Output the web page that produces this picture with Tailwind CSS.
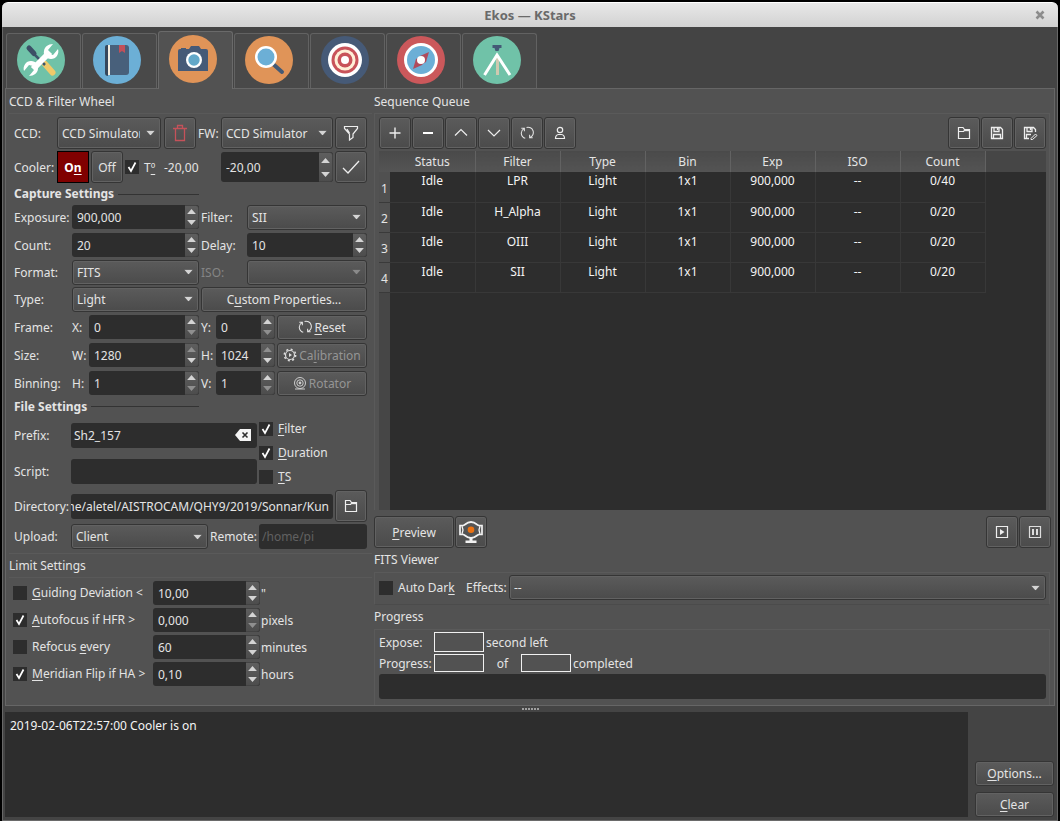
<!DOCTYPE html>
<html lang="en">
<head>
<meta charset="utf-8">
<title>Ekos — KStars</title>
<script src="https://cdn.jsdelivr.net/npm/@tailwindcss/browser@4"></script>
</head>
<body class="bg-black">
<svg class="hidden" aria-hidden="true">
  <symbol id="up" viewBox="0 0 7 4"><path d="M3.5 0 7 4H0z" fill="currentColor"/></symbol>
  <symbol id="down" viewBox="0 0 7 4"><path d="M0 0h7L3.5 4z" fill="currentColor"/></symbol>
  <symbol id="tick" viewBox="0 0 14 14"><path d="M3.5 7 6 11 10.500 2.500" fill="none" stroke="#fff" stroke-width="1.700"/></symbol>
  <symbol id="folder" viewBox="0 0 16 16"><path d="M2.500 13.500V2.500h4.500l1.500 2h5v9zM2.500 6.500h5l1.500-2" fill="none" stroke="#eee" stroke-width="1.200"/><path d="M8 4h6v2.200H8z" fill="#eee"/></symbol>
  <symbol id="sync" viewBox="0 0 16 16"><path d="M6 14A6 6 0 0 1 4.500 3M1.500 2.500h3.500v3.500M7.500 1.700a6 6 0 0 1 4 11.300M14.500 13.500h-3.500v-3.500" fill="none" stroke="currentColor" stroke-width="1.200"/></symbol>
</svg>

<div class="mx-[2px] pt-[2px] min-h-screen flex flex-col font-['Noto_Sans',sans-serif] text-[12px] leading-[21px] text-[#e4e4e4]
  [&_u]:underline-offset-2
  [&_.btn]:flex [&_.btn]:items-center [&_.btn]:justify-center [&_.btn]:rounded-[3px] [&_.btn]:border [&_.btn]:border-[#353535] [&_.btn]:bg-linear-to-b [&_.btn]:from-[#5b5b5b] [&_.btn]:to-[#4b4b4b] [&_.btn]:shadow-[inset_0_0_0_1px_#626262]
  [&_.tool]:w-8 [&_.tool]:h-8 [&_.tool]:shrink-0
  [&_.sel]:relative [&_.sel]:h-[25px] [&_.sel_select]:appearance-none [&_.sel_select]:w-full [&_.sel_select]:h-full [&_.sel_select]:pl-1 [&_.sel_select]:pr-5 [&_.sel_select]:rounded-[3px] [&_.sel_select]:border [&_.sel_select]:border-[#353535] [&_.sel_select]:bg-linear-to-b [&_.sel_select]:from-[#5b5b5b] [&_.sel_select]:to-[#4b4b4b] [&_.sel_select]:shadow-[inset_0_0_0_1px_#626262]
  [&_.sel_svg]:absolute [&_.sel_svg]:right-[6px] [&_.sel_svg]:top-1/2 [&_.sel_svg]:-translate-y-1/2 [&_.sel_svg]:w-[9px] [&_.sel_svg]:h-[5px] [&_.sel_svg]:text-[#d4d4d4] [&_.sel_svg]:pointer-events-none
  [&_.field]:h-[25px] [&_.field]:min-w-0 [&_.field]:rounded-[3px] [&_.field]:bg-[#2d2d2d]
  [&_.spin]:flex [&_.spin]:h-6 [&_.spin]:rounded-[3px] [&_.spin]:bg-[#2d2d2d] [&_.spin]:overflow-hidden [&_.spin_input]:flex-1 [&_.spin_input]:min-w-0 [&_.spin_input]:pl-[5px]
  [&_.spin_div]:w-[14px] [&_.spin_div]:flex [&_.spin_div]:flex-col [&_.spin_div]:border [&_.spin_div]:border-l-0 [&_.spin_div]:border-[#434343] [&_.spin_div]:rounded-r-[3px] [&_.spin_div]:bg-linear-to-b [&_.spin_div]:from-[#5e5e5e] [&_.spin_div]:to-[#4d4d4d]
  [&_.spin_button]:flex-1 [&_.spin_button]:flex [&_.spin_button]:items-center [&_.spin_button]:justify-center [&_.spin_button]:text-[#d4d4d4] [&_.spin_button:disabled]:text-[#8f8f8f] [&_.spin_svg]:w-[9px] [&_.spin_svg]:h-[5px]
  [&_.chk]:relative [&_.chk]:w-[14px] [&_.chk]:h-[14px] [&_.chk]:shrink-0 [&_.chk_input]:block [&_.chk_input]:appearance-none [&_.chk_input]:w-[14px] [&_.chk_input]:h-[14px] [&_.chk_input]:bg-[#2d2d2d] [&_.chk_svg]:hidden [&_.chk_svg]:absolute [&_.chk_svg]:inset-0 [&_.chk_svg]:w-[14px] [&_.chk_svg]:h-[14px] [&_.chk_svg]:pointer-events-none [&_.chk_input:checked+svg]:block
  [&_.row]:flex [&_.row]:items-center">

  <header class="relative h-[25px] flex items-center justify-center rounded-t-md bg-linear-to-b from-[#e8e8e8] to-[#d2d2d2] border-t border-white">
    <h1 class="font-bold text-[13px] text-[#6a6a6a]">Ekos — KStars</h1>
    <button aria-label="Close" class="absolute right-[13px] top-[7px]"><svg class="w-[10px] h-[10px]" viewBox="0 0 10 10"><path d="M1.500 1.500l7 7M8.500 1.500l-7 7" stroke="#8c8c8c" stroke-width="2.600"/></svg></button>
  </header>

  <div class="flex-1 flex flex-col bg-[#444] border-x border-[#686868]">
  <nav class="h-[61px] pl-[3px] flex items-end gap-px
    [&_button]:w-[75px] [&_button]:h-[55px] [&_button]:flex [&_button]:justify-center [&_button]:border [&_button]:border-b-0 [&_button]:border-[#626262] [&_button]:rounded-t-[3px] [&_button]:bg-[#494949] [&_button]:pt-[2px] [&_button]:pr-[5px] [&_svg]:w-12 [&_svg]:h-12">
    <button aria-label="Setup"><svg viewBox="0 0 48 48"><circle cx="24" cy="24" r="24" fill="#70c2a8"/>
      <path d="M28 28l7.500 8.500" stroke="#efc96a" stroke-width="6" stroke-linecap="round"/><path d="M16 17l12 12" stroke="#3e556b" stroke-width="2.500"/><path d="M12 12l5 5.500" stroke="#3c4f66" stroke-width="5" stroke-linecap="round"/>
      <path d="M16 33L33 16" stroke="#fff" stroke-width="6"/><path d="M36 8l-5 6 1 4 4 1 5-6c1.500 5-2 10-7 10-5 0-8-4-7-8 .5-4 4-7 9-7zM12 40l5-6-1-4-4-1-5 6c-1.500-5 2-10 7-10 5 0 8 4 7 8-.5 4-4 7-9 7z" fill="#fff"/></svg></button>
    <button aria-label="Scheduler"><svg viewBox="0 0 48 48"><circle cx="24" cy="24" r="24" fill="#6cafd6"/>
      <path d="M15 9h-1q-2 0-2 2v26q0 3 3 3z" fill="#35475b"/><path d="M17 9h16q3 0 3 3v24q0 3-3 3H17z" fill="#48607b"/><path d="M15 9h2v30h-2z" fill="#f3eee0"/><path d="M26 9h6v8l-3-2-3 2z" fill="#c1505a"/></svg></button>
    <button aria-label="CCD" aria-current="page" class="relative h-[58px]! pt-[3px]! -mb-px bg-[#525252]! border-[#6a6a6a]!"><svg viewBox="0 0 48 48"><circle cx="24" cy="24" r="24" fill="#e09458"/>
      <path d="M9 36V16q0-2 2-2h1v-1h5v1h3l2-3h8l2 3h5q2 0 2 2v20z" fill="#465a77"/><circle cx="25" cy="25" r="8" fill="#fff"/><circle cx="25" cy="25" r="5.700" fill="#62a8c9"/></svg></button>
    <button aria-label="Focus"><svg viewBox="0 0 48 48"><circle cx="24" cy="24" r="24" fill="#e09458"/>
      <path d="M28 28l9 8" stroke="#445a76" stroke-width="4" stroke-linecap="round"/><circle cx="21" cy="21" r="11" fill="#fff"/><circle cx="21" cy="21" r="8.500" fill="#6cafd6"/></svg></button>
    <button aria-label="Align"><svg viewBox="0 0 48 48"><circle cx="24" cy="24" r="24" fill="#465a77"/>
      <circle cx="24" cy="24" r="17" fill="#fff"/><circle cx="24" cy="24" r="13.500" fill="#c8535a"/><circle cx="24" cy="24" r="10.500" fill="#fff0d8"/><circle cx="24" cy="24" r="7.500" fill="#c8535a"/><circle cx="24" cy="24" r="4" fill="#fff"/></svg></button>
    <button aria-label="Guide"><svg viewBox="0 0 48 48"><circle cx="24" cy="24" r="24" fill="#cb585b"/>
      <circle cx="24" cy="24" r="17" fill="#fff"/><circle cx="24" cy="24" r="14" fill="#6cafd6"/><path d="M32 16l-3 10-5 3-4-4 3-5z" fill="#b04b5c"/><path d="M16 33l3-10 5-3 4 4-3 5z" fill="#b04b5c"/><circle cx="24" cy="24" r="4" fill="#fff"/></svg></button>
    <button aria-label="Mount"><svg viewBox="0 0 48 48"><circle cx="24" cy="24" r="24" fill="#70c2a8"/>
      <path d="M19.500 9h9v3h-2l-1 3h-3l-1-3h-2z" fill="#445a76"/><path d="M24.500 22v17" stroke="#cfc9b0" stroke-width="3"/><path d="M11.500 39L24 19l13 20" fill="none" stroke="#fff" stroke-width="3"/></svg></button>
  </nav>

  <main class="mx-[2px] flex-1 flex border border-[#666] bg-[#525252]">
    <section class="w-[366px] shrink-0 pl-[3px]">
      <h2 class="h-6 pt-[2px]">CCD &amp; Filter Wheel</h2>
      <div class="border-t border-[#595959] pl-[5px] pr-[5px] pt-[3px] pb-1">
        <div class="row">
          <label for="ccd" class="w-[43px]">CCD:</label>
          <div class="sel w-[104px] h-8!"><select id="ccd"><option>CCD Simulator</option></select><svg><use href="#down"/></svg></div>
          <button class="btn tool ml-[3px]" aria-label="Remove CCD"><svg class="w-4 h-5" viewBox="0 0 16 20"><path d="M1 5.500h14M5.500 5V2.500h5V5M3.500 6v11.500h9V6" fill="none" stroke="#c4525a" stroke-width="1.300"/></svg></button>
          <label for="fw" class="w-[25px] pl-[2px]">FW:</label>
          <div class="sel w-[112px] h-8!"><select id="fw"><option>CCD Simulator</option></select><svg><use href="#down"/></svg></div>
          <button class="btn tool ml-auto" aria-label="Filter settings"><svg class="w-4 h-4" viewBox="0 0 16 16"><path d="M1.500 1.500h13v2L10 9v3.500L6.500 15V9L1.500 3.500zM4 4l2.500 4" fill="none" stroke="#eee" stroke-width="1.200"/></svg></button>
        </div>
        <div class="row mt-[2px]">
          <span class="w-[43px]">Cooler:</span>
          <button class="w-8 h-8 border border-black bg-[#800000] text-white font-bold">O<u>n</u></button>
          <button class="btn tool ml-[2px]">Off</button>
          <label class="row ml-[2px]"><span class="chk"><input type="checkbox" checked><svg><use href="#tick"/></svg></span><span class="ml-[5px] w-5">T<u>º</u></span></label>
          <output class="w-[57px]">-20,00</output>
          <div class="spin w-[112px] h-[30px]!"><input aria-label="Target temperature" value="-20,00"><div><button aria-label="Increase"><svg><use href="#up"/></svg></button><button aria-label="Decrease"><svg><use href="#down"/></svg></button></div></div>
          <button class="btn tool ml-auto" aria-label="Apply temperature"><svg class="w-5 h-4" viewBox="0 0 20 16"><path d="M2 9l5 5L18 2" fill="none" stroke="#eee" stroke-width="1.300"/></svg></button>
        </div>

        <div class="row h-[22px] w-[185px] gap-1"><h3 class="font-bold leading-5">Capture Settings</h3><span class="flex-1 h-px bg-[#333]"></span></div>
        <div class="row h-6">
          <label for="exp" class="w-[58px]">Exposure:</label>
          <div class="spin w-[127px]"><input id="exp" value="900,000"><div><button aria-label="Increase"><svg><use href="#up"/></svg></button><button aria-label="Decrease"><svg><use href="#down"/></svg></button></div></div>
          <label for="filter" class="w-12 pl-[2px]">Filter:</label>
          <div class="sel flex-1"><select id="filter"><option>SII</option></select><svg><use href="#down"/></svg></div>
        </div>
        <div class="row h-6 mt-1">
          <label for="count" class="w-[58px]">Count:</label>
          <div class="spin w-[127px]"><input id="count" value="20"><div><button aria-label="Increase"><svg><use href="#up"/></svg></button><button aria-label="Decrease"><svg><use href="#down"/></svg></button></div></div>
          <label for="delay" class="w-12 pl-[2px]">Delay:</label>
          <div class="spin flex-1"><input id="delay" value="10"><div><button aria-label="Increase"><svg><use href="#up"/></svg></button><button aria-label="Decrease"><svg><use href="#down"/></svg></button></div></div>
        </div>
        <div class="row h-6 mt-[3px]">
          <label for="format" class="w-[58px]">Format:</label>
          <div class="sel w-[127px]"><select id="format"><option>FITS</option></select><svg><use href="#down"/></svg></div>
          <label for="iso" class="w-12 pl-[2px] text-[#858585]">ISO:</label>
          <div class="sel flex-1"><select id="iso" disabled><option></option></select><svg class="text-[#8a8a8a]!"><use href="#down"/></svg></div>
        </div>
        <div class="row h-6 mt-[3px]">
          <label for="type" class="w-[58px]">Type:</label>
          <div class="sel w-[127px]"><select id="type"><option>Light</option></select><svg><use href="#down"/></svg></div>
          <button class="btn h-[25px] flex-1 ml-[2px]"><span>C<u>u</u>stom Properties...</span></button>
        </div>
        <div class="row h-6 mt-1">
          <span class="w-[58px]">Frame:</span>
          <label for="fx" class="w-[17px]">X:</label>
          <div class="spin w-[110px]"><input id="fx" value="0"><div><button aria-label="Increase"><svg><use href="#up"/></svg></button><button disabled aria-label="Decrease"><svg><use href="#down"/></svg></button></div></div>
          <label for="fy" class="w-[17px] pl-[2px]">Y:</label>
          <div class="spin w-[59px]"><input id="fy" value="0"><div><button aria-label="Increase"><svg><use href="#up"/></svg></button><button disabled aria-label="Decrease"><svg><use href="#down"/></svg></button></div></div>
          <button class="btn h-[25px] flex-1 ml-[2px]"><svg class="w-[14px] h-[14px]"><use href="#sync"/></svg><span class="ml-[2px]"><u>R</u>eset</span></button>
        </div>
        <div class="row h-6 mt-1">
          <span class="w-[58px]">Size:</span>
          <label for="sw" class="w-[17px]">W:</label>
          <div class="spin w-[110px]"><input id="sw" value="1280"><div><button disabled aria-label="Increase"><svg><use href="#up"/></svg></button><button aria-label="Decrease"><svg><use href="#down"/></svg></button></div></div>
          <label for="sh" class="w-[17px] pl-[2px]">H:</label>
          <div class="spin w-[59px]"><input id="sh" value="1024"><div><button disabled aria-label="Increase"><svg><use href="#up"/></svg></button><button aria-label="Decrease"><svg><use href="#down"/></svg></button></div></div>
          <button disabled class="btn h-[25px] flex-1 ml-[2px] text-[#959595]"><svg class="w-[14px] h-[14px] shrink-0" viewBox="0 0 14 14"><circle cx="7" cy="7" r="4.500" fill="none" stroke="#ddd" stroke-width="1.200"/><circle cx="7" cy="7" r="5.700" fill="none" stroke="#ddd" stroke-width="1.500" stroke-dasharray="2 2.476"/><path d="M6 5l3 2-3 2z" fill="#ddd"/></svg><span class="ml-[2px]">Ca<u>l</u>ibration</span></button>
        </div>
        <div class="row h-6 mt-1">
          <span class="w-[58px]">Binning:</span>
          <label for="bh" class="w-[17px]">H:</label>
          <div class="spin w-[110px]"><input id="bh" value="1"><div><button aria-label="Increase"><svg><use href="#up"/></svg></button><button disabled aria-label="Decrease"><svg><use href="#down"/></svg></button></div></div>
          <label for="bv" class="w-[17px] pl-[2px]">V:</label>
          <div class="spin w-[59px]"><input id="bv" value="1"><div><button aria-label="Increase"><svg><use href="#up"/></svg></button><button disabled aria-label="Decrease"><svg><use href="#down"/></svg></button></div></div>
          <button disabled class="btn h-[25px] flex-1 ml-[2px] text-[#959595]"><svg class="w-[14px] h-[14px]" viewBox="0 0 14 14"><g fill="none" stroke="#ccc"><circle cx="7" cy="7" r="5.500"/><circle cx="7" cy="7" r="3.200"/><path d="M2 13h10"/></g><circle cx="7" cy="7" r="1.400" fill="#ccc"/></svg><span class="ml-[2px]">Rotator</span></button>
        </div>

        <div class="row h-[22px] w-[185px] gap-1"><h3 class="font-bold">File Settings</h3><span class="flex-1 h-px bg-[#333]"></span></div>
        <div class="flex">
          <div class="w-[243px]">
            <div class="row h-9">
              <label for="prefix" class="w-[57px]">Prefix:</label>
              <div class="field row flex-1 pr-[6px]"><input id="prefix" class="flex-1 min-w-0 pl-[3px]" value="Sh2_157"><button aria-label="Clear prefix"><svg class="w-4 h-3" viewBox="0 0 16 12"><path d="M5 0h11v12H5L0 6z" fill="#f4f4f4"/><path d="M7.500 3.500l5 5M12.500 3.500l-5 5" stroke="#2d2d2d" stroke-width="1.600"/></svg></button></div>
            </div>
            <div class="row h-9">
              <label for="script" class="w-[57px]">Script:</label>
              <input id="script" class="field flex-1">
            </div>
          </div>
          <div class="pl-[2px]">
            <label class="row h-6"><span class="chk"><input type="checkbox" checked><svg><use href="#tick"/></svg></span><span class="ml-[5px] leading-5"><u>F</u>ilter</span></label>
            <label class="row h-6"><span class="chk"><input type="checkbox" checked><svg><use href="#tick"/></svg></span><span class="ml-[5px] leading-5"><u>D</u>uration</span></label>
            <label class="row h-6"><span class="chk"><input type="checkbox"><svg><use href="#tick"/></svg></span><span class="ml-[5px] leading-5"><u>T</u>S</span></label>
          </div>
        </div>
        <div class="row mt-px">
          <label for="dir" class="w-[57px]">Directory:</label>
          <div class="field row w-[262px] overflow-hidden pr-1"><input id="dir" class="min-w-0 w-full text-right" dir="rtl" value="home/aletel/AISTROCAM/QHY9/2019/Sonnar/Kun"></div>
          <button class="btn tool ml-auto" aria-label="Choose directory"><svg class="w-4 h-4"><use href="#folder"/></svg></button>
        </div>
        <div class="row mt-[2px]">
          <label for="upload" class="w-[57px]">Upload:</label>
          <div class="sel w-[137px]"><select id="upload"><option>Client</option></select><svg><use href="#down"/></svg></div>
          <label for="remote" class="w-[51px] pl-[2px]">Remote:</label>
          <input id="remote" class="field flex-1 pl-[3px] placeholder:text-[#616161]" placeholder="/home/pi" disabled>
        </div>
      </div>

      <h2 class="h-6 pt-px border-t border-[#5a5a5a]">Limit Settings</h2>
      <div class="border-t border-[#595959] pt-[3px] pl-1">
        <div class="row h-6">
          <label class="row w-[140px]"><span class="chk"><input type="checkbox"><svg><use href="#tick"/></svg></span><span class="ml-[5px] leading-5 whitespace-nowrap"><u>G</u>uiding Deviation &lt;</span></label>
          <div class="spin w-[107px]"><input aria-label="Guiding deviation" value="10,00"><div><button aria-label="Increase"><svg><use href="#up"/></svg></button><button aria-label="Decrease"><svg><use href="#down"/></svg></button></div></div><span class="ml-px">"</span>
        </div>
        <div class="row h-6 mt-[3px]">
          <label class="row w-[140px]"><span class="chk"><input type="checkbox" checked><svg><use href="#tick"/></svg></span><span class="ml-[5px] leading-5 whitespace-nowrap"><u>A</u>utofocus if HFR &gt;</span></label>
          <div class="spin w-[107px]"><input aria-label="Autofocus HFR" value="0,000"><div><button aria-label="Increase"><svg><use href="#up"/></svg></button><button disabled aria-label="Decrease"><svg><use href="#down"/></svg></button></div></div><span class="ml-px">pixels</span>
        </div>
        <div class="row h-6 mt-[3px]">
          <label class="row w-[140px]"><span class="chk"><input type="checkbox"><svg><use href="#tick"/></svg></span><span class="ml-[5px] leading-5 whitespace-nowrap">Refocus <u>e</u>very</span></label>
          <div class="spin w-[107px]"><input aria-label="Refocus minutes" value="60"><div><button aria-label="Increase"><svg><use href="#up"/></svg></button><button aria-label="Decrease"><svg><use href="#down"/></svg></button></div></div><span class="ml-px">minutes</span>
        </div>
        <div class="row h-6 mt-[3px]">
          <label class="row w-[140px]"><span class="chk"><input type="checkbox" checked><svg><use href="#tick"/></svg></span><span class="ml-[5px] leading-5 whitespace-nowrap"><u>M</u>eridian Flip if HA &gt;</span></label>
          <div class="spin w-[107px]"><input aria-label="Meridian flip hours" value="0,10"><div><button aria-label="Increase"><svg><use href="#up"/></svg></button><button aria-label="Decrease"><svg><use href="#down"/></svg></button></div></div><span class="ml-px">hours</span>
        </div>
      </div>
    </section>

    <section class="flex-1 min-w-0 flex flex-col pl-[2px]">
      <h2 class="h-6 pt-[2px]">Sequence Queue</h2>
      <div class="flex-1 flex flex-col mr-1 pl-1 pr-[3px] pt-[3px] border-t border-x border-[#5a5a5a]">
        <div class="flex gap-px">
          <button class="btn tool" aria-label="Add"><svg class="w-4 h-4" viewBox="0 0 16 16"><path d="M8 2.500v11M2.500 8h11" stroke="#eee" stroke-width="1.400"/></svg></button>
          <button class="btn tool" aria-label="Remove"><svg class="w-4 h-4" viewBox="0 0 16 16"><path d="M3 8h10" stroke="#fff" stroke-width="2"/></svg></button>
          <button class="btn tool" aria-label="Move up"><svg class="w-4 h-4" viewBox="0 0 16 16"><path d="M2 10.500L8 4.500l6 6" fill="none" stroke="#eee" stroke-width="1.200"/></svg></button>
          <button class="btn tool" aria-label="Move down"><svg class="w-4 h-4" viewBox="0 0 16 16"><path d="M2 5l6 6 6-6" fill="none" stroke="#eee" stroke-width="1.200"/></svg></button>
          <button class="btn tool" aria-label="Reset"><svg class="w-[14px] h-[14px]"><use href="#sync"/></svg></button>
          <button class="btn tool" aria-label="Observer"><svg class="w-4 h-4" viewBox="0 0 16 16"><circle cx="8" cy="5" r="2.700" fill="none" stroke="#eee" stroke-width="1.200"/><path d="M3.500 13.500q0-3.500 3-4h3q3 .5 3 4z" fill="none" stroke="#eee" stroke-width="1.200"/></svg></button>
          <button class="btn tool ml-auto" aria-label="Open"><svg class="w-4 h-4"><use href="#folder"/></svg></button>
          <button class="btn tool" aria-label="Save"><svg class="w-4 h-4" viewBox="0 0 16 16"><path d="M2.500 2.500h9l2 2v9h-11zM5 3v3.500h5V3M4.500 13V9.500h7V13M8.500 3v2" fill="none" stroke="#eee" stroke-width="1.300"/></svg></button>
          <button class="btn tool" aria-label="Save as"><svg class="w-4 h-4" viewBox="0 0 16 16"><path d="M7 13.500H2.500v-11h9l2 2V7M5 3v3.500h5V3M4.500 13V9.500H9M8.500 3v2" fill="none" stroke="#eee" stroke-width="1.300"/><path d="M9 13.500l4.500-4.500 1.500 1.500-4.500 4H9z" fill="none" stroke="#eee"/></svg></button>
        </div>
        <div class="mt-[2px] flex-1 flex flex-col bg-[#2d2d2d]">
          <table class="w-full table-fixed border-collapse text-center
            [&_th]:p-0 [&_th]:font-normal [&_td]:p-0 [&_td]:align-top [&_td]:leading-[18px] [&_td]:text-[#f4f4f4] [&_td]:border-r [&_td]:border-b [&_td]:border-[#383838] [&_tbody_tr]:h-[30px] [&_thead_tr]:h-[21px] [&_thead_th]:bg-linear-to-b [&_thead_th]:from-[#4a4a4a] [&_thead_th]:to-[#545454] [&_thead_th]:border-r [&_thead_th]:border-[#626262] [&_tbody_th]:bg-[#505050] [&_tbody_th]:align-bottom [&_tbody_th]:pb-[3px] [&_tbody_th]:border-b [&_tbody_th]:border-[#3a3a3a]">
            <colgroup><col class="w-[11px]"><col class="w-[85px]"><col class="w-[85px]"><col class="w-[85px]"><col class="w-[85px]"><col class="w-[85px]"><col class="w-[85px]"><col class="w-[85px]"><col></colgroup>
            <thead><tr><th class="border-r-0!"></th><th>Status</th><th>Filter</th><th>Type</th><th>Bin</th><th>Exp</th><th>ISO</th><th>Count</th><th class="bg-none! bg-[#464646]! border-0!"></th></tr></thead>
            <tbody>
              <tr><th>1</th><td>Idle</td><td>LPR</td><td>Light</td><td>1x1</td><td>900,000</td><td>--</td><td>0/40</td></tr>
              <tr><th>2</th><td>Idle</td><td>H_Alpha</td><td>Light</td><td>1x1</td><td>900,000</td><td>--</td><td>0/20</td></tr>
              <tr><th>3</th><td>Idle</td><td>OIII</td><td>Light</td><td>1x1</td><td>900,000</td><td>--</td><td>0/20</td></tr>
              <tr><th>4</th><td>Idle</td><td>SII</td><td>Light</td><td>1x1</td><td>900,000</td><td>--</td><td>0/20</td></tr>
            </tbody>
          </table>
          <div class="flex-1 w-[11px] bg-[#464646]"></div>
        </div>
      </div>

      <div class="mt-[6px] pr-[3px] flex gap-px">
        <button class="btn w-20 h-8"><span><u>P</u>review</span></button>
        <button class="btn tool" aria-label="Live video"><svg class="w-6 h-6" viewBox="0 0 24 24"><path d="M1 5.500h3.500L6 4.500Q12-.5 18 4.500l1.500 1H23v9h-3.500l-1.500 1q-6 5-12 0l-1.500-1H1z" fill="none" stroke="#f2f2f2" stroke-width="1.700"/><path d="M3 6l1 4-1 4M21 6l-1 4 1 4" fill="none" stroke="#f2f2f2" stroke-width="1.300"/><circle cx="12" cy="9.700" r="3.300" fill="#ec7211"/><path d="M10.500 18h3v2.500h4V23h-11v-2.500h4z" fill="#f2f2f2"/></svg></button>
        <button class="btn tool ml-auto" aria-label="Start"><svg class="w-4 h-4" viewBox="0 0 16 16"><path d="M2.500 2.500h11v11h-11z" fill="none" stroke="#eee" stroke-width="1.200"/><path d="M6 5l4.500 3L6 11z" fill="#eee"/></svg></button>
        <button class="btn tool" aria-label="Pause"><svg class="w-4 h-4" viewBox="0 0 16 16"><path d="M2.500 2.500h11v11h-11z" fill="none" stroke="#ddd" stroke-width="1.200"/><path d="M5 5h2v6H5zM9 5h2v6H9z" fill="#ddd"/></svg></button>
      </div>

      <h2 class="h-6 pt-px">FITS Viewer</h2>
      <div class="mr-1 pl-1 pr-[3px] pt-[2px] pb-1 border border-b-[#4b4b4b] border-[#5a5a5a]">
        <div class="row">
          <label class="row w-[87px]"><span class="chk"><input type="checkbox"><svg><use href="#tick"/></svg></span><span class="ml-[5px] leading-5">Auto Dar<u>k</u></span></label>
          <label for="effects" class="w-[43px] leading-5">Effects:</label>
          <div class="sel flex-1"><select id="effects"><option>--</option></select><svg><use href="#down"/></svg></div>
        </div>
      </div>

      <h2 class="h-6 pt-px">Progress</h2>
      <div class="mr-1 pl-1 pr-[3px] pt-[2px] pb-[6px] border border-b-0 border-[#5a5a5a]">
        <div class="row h-5"><span class="w-[55px]">Expose:</span><span class="w-[50px] h-5 border border-[#f0f0f0]"></span><span class="ml-[2px]">second left</span></div>
        <div class="row mt-[2px] h-[18px]"><span class="w-[55px]">Progress:</span><span class="w-[50px] h-[18px] border border-[#f0f0f0]"></span><span class="w-[37px] text-center">of</span><span class="w-[50px] h-[18px] border border-[#f0f0f0]"></span><span class="ml-[2px]">completed</span></div>
        <div role="progressbar" aria-label="Progress" class="mt-[2px] h-[25px] rounded-[3px] bg-[#2d2d2d]"></div>
      </div>
    </section>
  </main>

  <div class="h-[6px] flex items-center justify-center gap-px [&_i]:w-[2px] [&_i]:h-[2px] [&_i]:bg-[#a0a0a0]"><i></i><i></i><i></i><i></i><i></i><i></i></div>

  <footer class="h-[109px] pl-[2px] pr-[3px] pb-[3px] flex border-b border-[#6a6a6a]">
    <div role="log" class="flex-1 bg-[#2d2d2d] pl-[5px] pt-[3px] text-[#f4f4f4]">2019-02-06T22:57:00 Cooler is on</div>
    <div class="w-[79px] ml-[7px] flex flex-col justify-end gap-[6px]">
      <button class="btn h-[25px]"><span><u>O</u>ptions...</span></button>
      <button class="btn h-[25px]"><span><u>C</u>lear</span></button>
    </div>
  </footer>
  </div>
</div>
</body>
</html>
